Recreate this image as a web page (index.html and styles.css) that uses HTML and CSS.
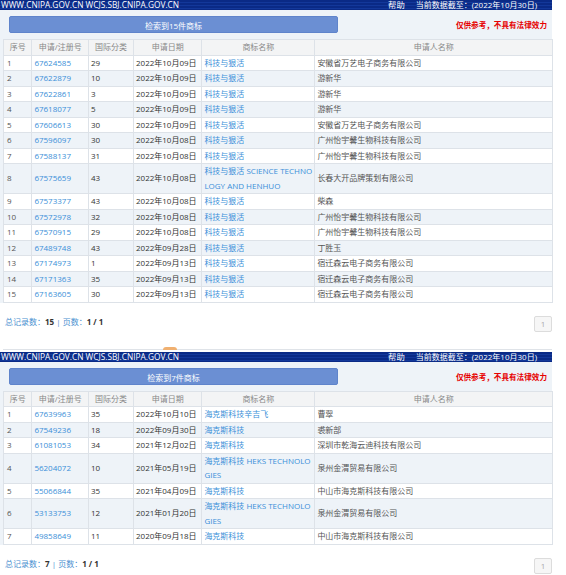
FILE: index.html
```html
<!DOCTYPE html>
<html lang="zh-CN">
<head>
<meta charset="utf-8">
<title>商标检索结果</title>
<link rel="stylesheet" href="styles.css">
</head>
<body>
<div class="page">
  <section class="result">
    <div class="topbar">
      <span class="site">WWW.CNIPA.GOV.CN WCJS.SBJ.CNIPA.GOV.CN</span>
      <span class="help">帮助</span>
      <span class="date">当前数据截至：(2022年10月30日)</span>
    </div>
    <div class="panel">
      <div class="toolbar">
        <div class="count-btn">检索到15件商标</div>
        <div class="notice">仅供参考，不具有法律效力</div>
      </div>
      <table class="grid">
        <colgroup>
          <col class="c1"><col class="c2"><col class="c3"><col class="c4"><col class="c5"><col class="c6">
        </colgroup>
        <thead>
          <tr><th>序号</th><th>申请/注册号</th><th>国际分类</th><th>申请日期</th><th>商标名称</th><th>申请人名称</th></tr>
        </thead>
        <tbody>
          <tr><td class="seq">1</td><td class="lnk">67624585</td><td>29</td><td>2022年10月09日</td><td class="lnk">科技与狠活</td><td class="who">安徽省万艺电子商务有限公司</td></tr>
          <tr><td class="seq">2</td><td class="lnk">67622879</td><td>10</td><td>2022年10月09日</td><td class="lnk">科技与狠活</td><td class="who">游新华</td></tr>
          <tr><td class="seq">3</td><td class="lnk">67622861</td><td>3</td><td>2022年10月09日</td><td class="lnk">科技与狠活</td><td class="who">游新华</td></tr>
          <tr><td class="seq">4</td><td class="lnk">67618077</td><td>5</td><td>2022年10月09日</td><td class="lnk">科技与狠活</td><td class="who">游新华</td></tr>
          <tr><td class="seq">5</td><td class="lnk">67606613</td><td>30</td><td>2022年10月09日</td><td class="lnk">科技与狠活</td><td class="who">安徽省万艺电子商务有限公司</td></tr>
          <tr><td class="seq">6</td><td class="lnk">67596097</td><td>30</td><td>2022年10月08日</td><td class="lnk">科技与狠活</td><td class="who">广州怡宇馨生物科技有限公司</td></tr>
          <tr><td class="seq">7</td><td class="lnk">67588137</td><td>31</td><td>2022年10月08日</td><td class="lnk">科技与狠活</td><td class="who">广州怡宇馨生物科技有限公司</td></tr>
          <tr><td class="seq">8</td><td class="lnk">67575659</td><td>43</td><td>2022年10月08日</td><td class="lnk">科技与狠活 SCIENCE TECHNOLOGY AND HENHUO</td><td class="who">长春大开品牌策划有限公司</td></tr>
          <tr><td class="seq">9</td><td class="lnk">67573377</td><td>43</td><td>2022年10月08日</td><td class="lnk">科技与狠活</td><td class="who">柴森</td></tr>
          <tr><td class="seq">10</td><td class="lnk">67572978</td><td>32</td><td>2022年10月08日</td><td class="lnk">科技与狠活</td><td class="who">广州怡宇馨生物科技有限公司</td></tr>
          <tr><td class="seq">11</td><td class="lnk">67570915</td><td>29</td><td>2022年10月08日</td><td class="lnk">科技与狠活</td><td class="who">广州怡宇馨生物科技有限公司</td></tr>
          <tr><td class="seq">12</td><td class="lnk">67489748</td><td>43</td><td>2022年09月28日</td><td class="lnk">科技与狠活</td><td class="who">丁胜玉</td></tr>
          <tr><td class="seq">13</td><td class="lnk">67174973</td><td>1</td><td>2022年09月13日</td><td class="lnk">科技与狠活</td><td class="who">宿迁森云电子商务有限公司</td></tr>
          <tr><td class="seq">14</td><td class="lnk">67171363</td><td>35</td><td>2022年09月13日</td><td class="lnk">科技与狠活</td><td class="who">宿迁森云电子商务有限公司</td></tr>
          <tr><td class="seq">15</td><td class="lnk">67163605</td><td>30</td><td>2022年09月13日</td><td class="lnk">科技与狠活</td><td class="who">宿迁森云电子商务有限公司</td></tr>
        </tbody>
      </table>
    </div>
    <div class="footer">
      <div class="stats">总记录数：<b>15</b> | 页数：<b>1 / 1</b></div>
      <div class="pager">1</div>
    </div>
  </section>

  <div class="divider"><span class="handle"></span></div>

  <section class="result">
    <div class="topbar">
      <span class="site">WWW.CNIPA.GOV.CN WCJS.SBJ.CNIPA.GOV.CN</span>
      <span class="help">帮助</span>
      <span class="date">当前数据截至：(2022年10月30日)</span>
    </div>
    <div class="panel">
      <div class="toolbar">
        <div class="count-btn">检索到7件商标</div>
        <div class="notice">仅供参考，不具有法律效力</div>
      </div>
      <table class="grid">
        <colgroup>
          <col class="c1"><col class="c2"><col class="c3"><col class="c4"><col class="c5"><col class="c6">
        </colgroup>
        <thead>
          <tr><th>序号</th><th>申请/注册号</th><th>国际分类</th><th>申请日期</th><th>商标名称</th><th>申请人名称</th></tr>
        </thead>
        <tbody>
          <tr><td class="seq">1</td><td class="lnk">67639963</td><td>35</td><td>2022年10月10日</td><td class="lnk">海克斯科技辛吉飞</td><td class="who">曹翠</td></tr>
          <tr><td class="seq">2</td><td class="lnk">67549236</td><td>18</td><td>2022年09月30日</td><td class="lnk">海克斯科技</td><td class="who">裘新部</td></tr>
          <tr><td class="seq">3</td><td class="lnk">61081053</td><td>34</td><td>2021年12月02日</td><td class="lnk">海克斯科技</td><td class="who">深圳市乾海云迪科技有限公司</td></tr>
          <tr><td class="seq">4</td><td class="lnk">56204072</td><td>10</td><td>2021年05月19日</td><td class="lnk">海克斯科技 HEKS TECHNOLOGIES</td><td class="who">泉州金渭贸易有限公司</td></tr>
          <tr><td class="seq">5</td><td class="lnk">55066844</td><td>35</td><td>2021年04月09日</td><td class="lnk">海克斯科技</td><td class="who">中山市海克斯科技有限公司</td></tr>
          <tr><td class="seq">6</td><td class="lnk">53133753</td><td>12</td><td>2021年01月20日</td><td class="lnk">海克斯科技 HEKS TECHNOLOGIES</td><td class="who">泉州金渭贸易有限公司</td></tr>
          <tr><td class="seq">7</td><td class="lnk">49858649</td><td>11</td><td>2020年09月18日</td><td class="lnk">海克斯科技</td><td class="who">中山市海克斯科技有限公司</td></tr>
        </tbody>
      </table>
    </div>
    <div class="footer">
      <div class="stats">总记录数：<b>7</b> | 页数：<b>1 / 1</b></div>
      <div class="pager">1</div>
    </div>
  </section>
</div>
</body>
</html>
```

FILE: styles.css
```css
* { box-sizing: border-box; }

body {
  margin: 0;
  background: #fff;
  font-family: "Open Sans", "Noto Sans CJK SC", sans-serif;
  font-size: 8px;
  color: #333;
}

.page {
  width: 552px;
}

.topbar {
  height: 10px;
  display: flex;
  align-items: center;
  padding: 0 15px 0 1px;
  color: #fff;
  font-size: 8.3px;
  line-height: 10px;
  background: repeating-linear-gradient(180deg, #0a2a86 0 2px, #13389a 2px 3px);
  white-space: nowrap;
}

.topbar .site { flex: 1; }
.topbar .help { margin-right: 11px; }
.topbar .date { font-size: 8px; }

.panel {
  background: #eef3f8;
  padding-left: 3px;
}

.toolbar {
  height: 29px;
  display: flex;
  align-items: center;
  justify-content: space-between;
  padding: 0 5px 0 6px;
}

.count-btn {
  width: 329px;
  height: 17px;
  line-height: 17px;
  text-align: center;
  color: #fff;
  background: #6b8fd3;
  border: 1px solid #5f84cb;
  border-radius: 2px;
}

.notice {
  color: #e60000;
  font-weight: bold;
  font-size: 7.6px;
}

.grid {
  width: 549px;
  border-collapse: collapse;
  table-layout: fixed;
  background: #fff;
}

.grid col.c1 { width: 28.4px; }
.grid col.c2 { width: 56.6px; }
.grid col.c3 { width: 45px; }
.grid col.c4 { width: 68.4px; }
.grid col.c5 { width: 113px; }
.grid col.c6 { width: 237.6px; }

.grid th,
.grid td {
  border: 1px solid #dde2e8;
  padding: 0 2px;
  line-height: 14.5px;
  font-weight: normal;
  text-align: left;
  vertical-align: middle;
}

.grid th {
  background: #f3f4f5;
  color: #888;
  text-align: center;
  line-height: 14.5px;
}

.grid tbody tr:nth-child(even) td { background: #eef3f8; }

.grid td.seq { color: #555; padding-left: 3px; }
.grid td.lnk { color: #3a8fd8; word-break: break-all; }
.grid td.who { color: #555; }

.footer {
  height: 46px;
  display: flex;
  justify-content: space-between;
  align-items: flex-start;
  padding: 12px 0 0 5px;
}

.stats {
  color: #4a90d0;
  line-height: 14px;
}

.stats b {
  color: #333;
  font-weight: bold;
}

.pager {
  width: 18px;
  height: 16px;
  line-height: 14px;
  text-align: center;
  color: #aaa;
  background: #f6f6f6;
  border: 1px solid #dcdcdc;
  border-radius: 2px;
  margin-top: 1px;
}

.divider {
  height: 3px;
  margin: 0 0 0 3px;
  border-top: 1px solid #dfe3e8;
  position: relative;
}

.divider .handle {
  position: absolute;
  left: 160px;
  top: -3px;
  width: 14px;
  height: 3px;
  border-radius: 7px 7px 0 0;
  background: #f0b070;
}
```
